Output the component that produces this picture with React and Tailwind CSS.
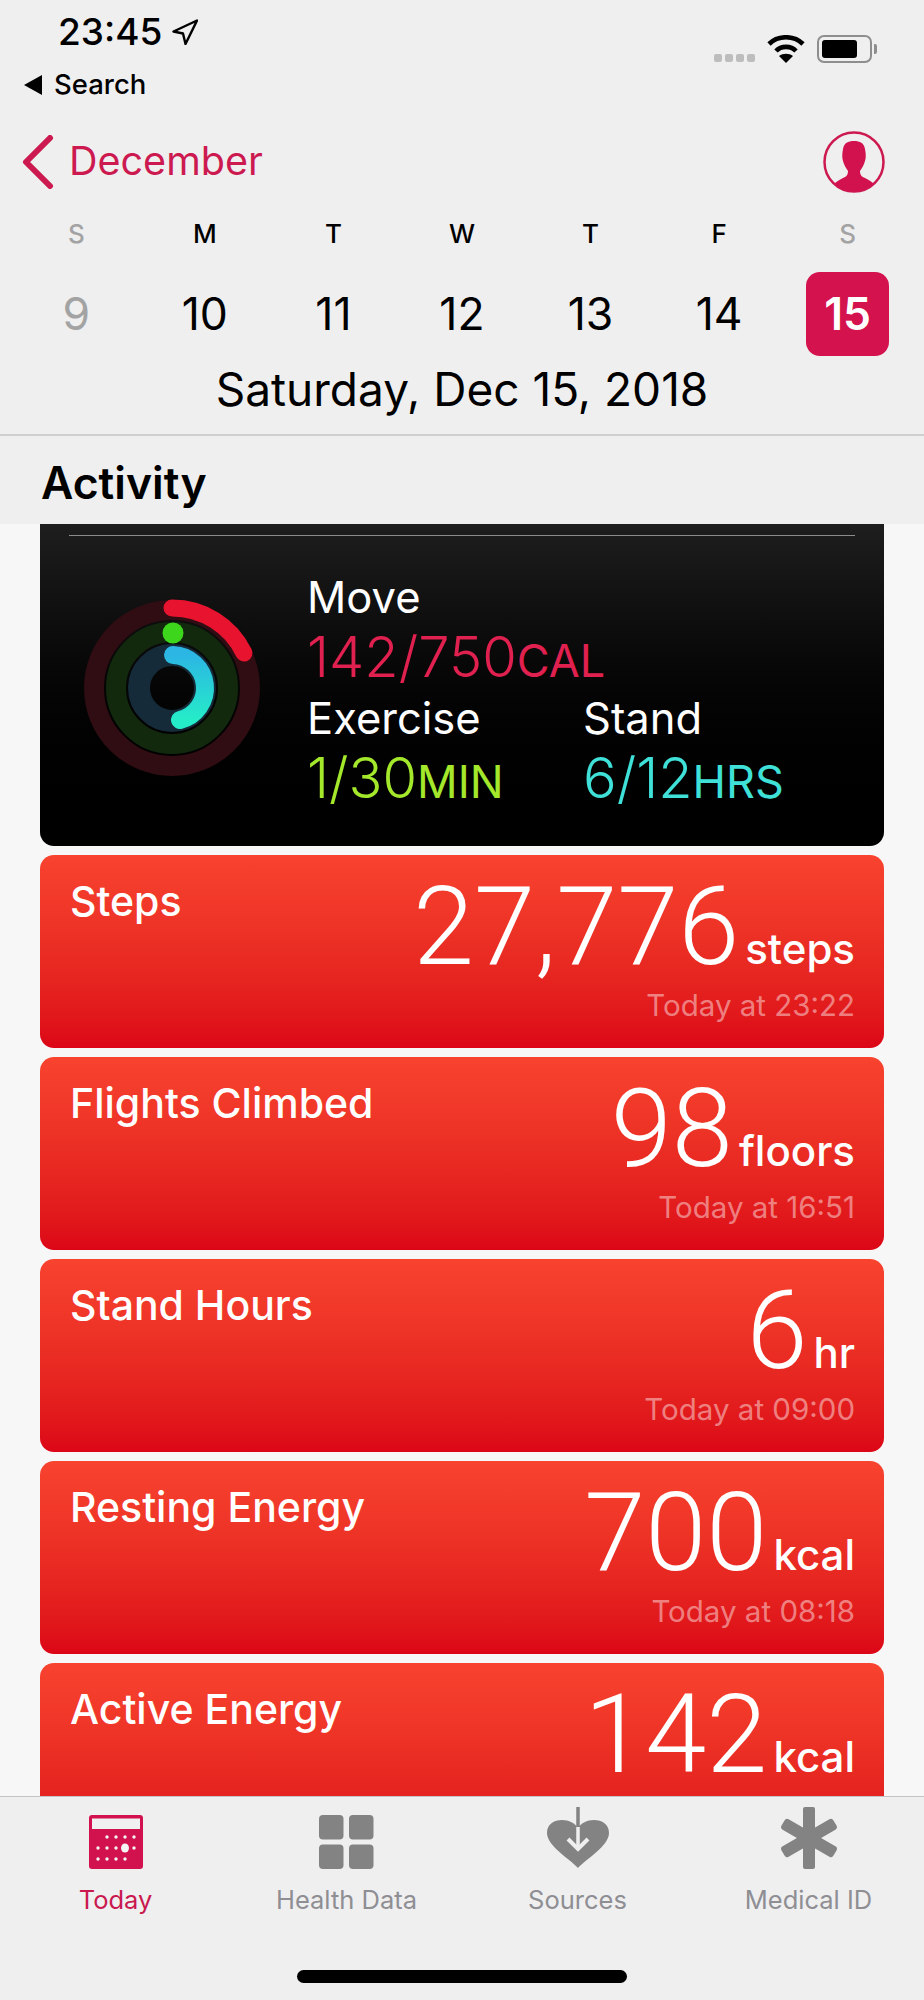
import React from 'react';

const DAYS = [
  { letter: 'S', num: '9', muted: true },
  { letter: 'M', num: '10' },
  { letter: 'T', num: '11' },
  { letter: 'W', num: '12' },
  { letter: 'T', num: '13' },
  { letter: 'F', num: '14' },
  { letter: 'S', num: '15', muted: true, active: true },
];

const CARDS = [
  { title: 'Steps', value: '27,776', unit: 'steps', time: 'Today at 23:22' },
  { title: 'Flights Climbed', value: '98', unit: 'floors', time: 'Today at 16:51' },
  { title: 'Stand Hours', value: '6', unit: 'hr', time: 'Today at 09:00' },
  { title: 'Resting Energy', value: '700', unit: 'kcal', time: 'Today at 08:18' },
  { title: 'Active Energy', value: '142', unit: 'kcal' },
];

// dots on the little calendar in the Today tab
const CAL_DOTS = [
  [18, 22], [27, 22], [36, 22], [45, 22],
  [9, 33], [18, 33], [27, 33], [45, 33],
  [9, 44], [18, 44], [27, 44], [36, 44],
];

function Rings() {
  return (
    <svg width="180" height="180" viewBox="0 0 180 180" className="ml-[13px] shrink-0 -translate-y-[3px]">
      <defs>
        <linearGradient id="blueArc" x1="0" y1="0" x2="0" y2="1">
          <stop offset="0" stopColor="#2cb6e4" />
          <stop offset="1" stopColor="#25ecc8" />
        </linearGradient>
      </defs>
      <circle cx="90" cy="90" r="78" fill="none" stroke="#300c13" strokeWidth="20" />
      <circle cx="90" cy="90" r="56" fill="none" stroke="#12290e" strokeWidth="20" />
      <circle cx="90" cy="90" r="33" fill="none" stroke="#152b39" strokeWidth="22" />
      <path d="M90 10 A80 80 0 0 1 162 55" fill="none" stroke="#e8132f" strokeWidth="17" strokeLinecap="round" />
      <circle cx="91" cy="35" r="10.5" fill="#3ed51d" />
      <path d="M91 57 A33 33 0 0 1 98 122" fill="none" stroke="url(#blueArc)" strokeWidth="18" strokeLinecap="round" />
    </svg>
  );
}

function Metric({ label, value, unit, color }) {
  return (
    <div>
      <div className="text-[43.5px] leading-[44px] text-white">{label}</div>
      <div className={`mt-[13px] flex items-baseline leading-[50px] ${color}`}>
        <span className="text-[56px] font-light">{value}</span>
        <span className="text-[45px] font-normal">{unit}</span>
      </div>
    </div>
  );
}

function StatCard({ title, value, unit, time }) {
  return (
    <div className="flex h-[193px] shrink-0 justify-between rounded-[14px] bg-gradient-to-b from-[#f8432f] to-[#dc0517] pr-[29px] pl-[30px]">
      <div className="pt-[24px] text-[41px] leading-[44px] font-medium text-white">{title}</div>
      <div className="flex flex-col items-end">
        <div className="flex h-[131px] items-baseline gap-[6px] pt-[13px] text-white">
          <span className="font-['Roboto'] text-[110px] leading-[118px] font-light">{value}</span>
          <span className="text-[42px] font-medium">{unit}</span>
        </div>
        {time && <div className="mt-[2px] text-[29.5px] leading-[34px] text-white/45">{time}</div>}
      </div>
    </div>
  );
}

function StatusBar() {
  return (
    <div className="flex h-[130px] justify-between pr-[47px]">
      <div>
        <div className="flex h-[64px] items-center gap-[10px] pl-[58px]">
          <span className="text-[37px] font-medium text-black">23:45</span>
          <svg width="26" height="26" viewBox="0 0 26 26" fill="none" stroke="#000" strokeWidth="2.4" strokeLinejoin="round">
            <path d="M25 1.5 L1.5 12.5 L11 14.5 L13.5 25 Z" />
          </svg>
        </div>
        <div className="flex h-[36px] items-center gap-[12px] pt-[5px] pl-[24px]">
          <svg width="18" height="20" viewBox="0 0 18 20">
            <path d="M18 0 V20 L0 10 Z" fill="#000" />
          </svg>
          <span className="text-[27.5px] font-medium text-black">Search</span>
        </div>
      </div>
      <div className="flex h-[67px] items-end gap-[12px] pb-[4px]">
        <div className="mb-[1px] flex gap-[3px]">
          <span className="h-[8px] w-[8px] rounded-[2px] bg-[#bdbdbd]" />
          <span className="h-[8px] w-[8px] rounded-[2px] bg-[#bdbdbd]" />
          <span className="h-[8px] w-[8px] rounded-[2px] bg-[#bdbdbd]" />
          <span className="h-[8px] w-[8px] rounded-[2px] bg-[#bdbdbd]" />
        </div>
        <svg width="38" height="28" viewBox="0 0 38 28" fill="none" stroke="#000" strokeWidth="4.6">
          <path d="M2 9 C11 0 27 0 36 9" />
          <path d="M9 16 C14 10.5 24 10.5 29 16" />
          <path d="M19 28 L12 21 C16 18 22 18 26 21 Z" fill="#000" stroke="none" />
        </svg>
        <div className="flex items-center gap-[2px]">
          <div className="flex h-[28px] w-[55px] items-center rounded-[7px] border-[2px] border-[#8e8e8e] p-[3px]">
            <div className="h-full w-[35px] rounded-[3px] bg-black" />
          </div>
          <div className="h-[10px] w-[3px] rounded-r-[2px] bg-[#8e8e8e]" />
        </div>
      </div>
    </div>
  );
}

function TabIcon({ name }) {
  if (name === 'today') {
    return (
      <svg width="54" height="54" viewBox="0 0 54 54">
        <rect width="54" height="54" rx="3" fill="#d2114f" />
        <rect x="3" y="3.5" width="48" height="10.5" fill="#f0f0f0" />
        {CAL_DOTS.map(([x, y]) => <circle key={`${x}-${y}`} cx={x} cy={y} r="1.7" fill="#f4f4f4" />)}
        <ellipse cx="36" cy="33" rx="4" ry="4.6" fill="#f4f4f4" />
      </svg>
    );
  }
  if (name === 'data') {
    return (
      <svg width="55" height="54" viewBox="0 0 55 54" fill="#838383">
        <rect width="24.5" height="24.5" rx="4" />
        <rect x="30" width="24.5" height="24.5" rx="4" />
        <rect y="29.5" width="24.5" height="24.5" rx="4" />
        <rect x="30" y="29.5" width="24.5" height="24.5" rx="4" />
      </svg>
    );
  }
  if (name === 'sources') {
    return (
      <svg width="64" height="62" viewBox="0 0 64 62">
        <path d="M32 61 C24 52 1 39 1 26 C1 17 8 13 16 13 C23 13 29 16 32 21 C35 16 41 13 48 13 C56 13 63 17 63 26 C63 39 40 52 32 61 Z" fill="#838383" />
        <path d="M32 0 V20" stroke="#838383" strokeWidth="3.5" strokeLinecap="round" fill="none" />
        <path d="M32 20 V41" stroke="#efeff0" strokeWidth="3.5" fill="none" />
        <path d="M22 32 L32 42 L42 32" stroke="#efeff0" strokeWidth="4" fill="none" />
      </svg>
    );
  }
  return (
    <svg width="60" height="62" viewBox="0 0 60 62" fill="#838383">
      <rect x="24" y="0" width="12" height="62" rx="2" />
      <rect x="24" y="1" width="12" height="60" rx="3" transform="rotate(60 30 31)" />
      <rect x="24" y="1" width="12" height="60" rx="3" transform="rotate(-60 30 31)" />
    </svg>
  );
}

function Tab({ name, label, active }) {
  return (
    <div className="flex flex-col items-center">
      <div className="flex h-[66px] items-end justify-center">
        <TabIcon name={name} />
      </div>
      <span className={`mt-[16px] text-[25.5px] leading-[30px] ${active ? 'text-[#c9194f]' : 'text-[#8e8e93]'}`}>{label}</span>
    </div>
  );
}

export default function App() {
  return (
    <div className="flex h-[2000px] w-[924px] flex-col overflow-hidden bg-[#f7f7f8] font-['Inter',sans-serif]">
      <header className="h-[434px] shrink-0 bg-[#efeff0]">
        <StatusBar />
        <div className="flex h-[64px] items-center justify-between pr-[39px] pl-[22px]">
          <div className="flex items-center gap-[15px]">
            <svg width="32" height="54" viewBox="0 0 32 54" fill="none" stroke="#cc1a50" strokeWidth="6" strokeLinecap="round" strokeLinejoin="round">
              <path d="M28 3 L4 27 L28 51" />
            </svg>
            <span className="text-[39.5px] text-[#cc1a50]">December</span>
          </div>
          <svg width="62" height="62" viewBox="0 0 62 62">
            <circle cx="31" cy="31" r="29.5" fill="#efeff0" stroke="#cc1a50" strokeWidth="2.5" />
            <path d="M31 10 C37 10 41 12 42 18 C43 23 43 27 42 30 C41 34 39 37 37 40 C37 44 39 46 42 47 C46 49 49 51 51 53 C46 58 39 60.5 31 60.5 C23 60.5 16 58 11 53 C13 51 16 49 20 47 C23 46 25 44 25 40 C23 37 21 34 20 30 C19 27 19 23 20 18 C21 12 25 10 31 10 Z" fill="#d2114f" />
          </svg>
        </div>
        <div className="grid grid-cols-7 px-[12px] pt-[24px]">
          {DAYS.map((d, i) => (
            <div key={i} className="flex flex-col items-center">
              <span className={`text-[26px] leading-[32px] font-medium ${d.muted ? 'text-[#a3a3a3]' : 'text-black'}`}>{d.letter}</span>
              <div className={`mt-[22px] flex h-[84px] w-[83px] items-center justify-center rounded-[14px] text-[44.5px] ${d.active ? 'bg-[#d4124e] font-semibold text-white' : d.muted ? 'text-[#a3a3a3]' : 'text-black'}`}>
                {d.num}
              </div>
            </div>
          ))}
        </div>
        <div className="mt-[7px] text-center text-[46px] leading-[52px] text-black">Saturday, Dec 15, 2018</div>
      </header>

      <div className="flex h-[90px] shrink-0 items-center border-t-2 border-[#cfcfcf] bg-[#efeff0] pt-[7px] pl-[41px] text-[44.5px] font-semibold text-black">
        Activity
      </div>

      <main className="flex min-h-0 flex-1 flex-col gap-[9px] overflow-hidden px-[40px]">
        <section className="h-[322px] shrink-0 rounded-b-[14px] bg-gradient-to-b from-[#1e1e1e] to-black px-[29px] pt-[11px]">
          <div className="h-px bg-[#8c8c8c]" />
          <div className="flex items-center pt-[39px]">
            <Rings />
            <div className="ml-[45px] flex flex-col">
              <Metric label="Move" value="142/750" unit="CAL" color="text-[#e0204f]" />
              <div className="mt-[10px] flex">
                <div className="w-[276px]">
                  <Metric label="Exercise" value="1/30" unit="MIN" color="text-[#a4e82c]" />
                </div>
                <Metric label="Stand" value="6/12" unit="HRS" color="text-[#3fe0d8]" />
              </div>
            </div>
          </div>
        </section>
        {CARDS.map(c => <StatCard key={c.title} {...c} />)}
      </main>

      <nav className="h-[204px] shrink-0 border-t border-[#c4c4c4] bg-[#efeff0]">
        <div className="grid grid-cols-4 pt-[6px]">
          <Tab name="today" label="Today" active />
          <Tab name="data" label="Health Data" />
          <Tab name="sources" label="Sources" />
          <Tab name="medical" label="Medical ID" />
        </div>
        <div className="mx-auto mt-[55px] h-[13px] w-[330px] rounded-full bg-black" />
      </nav>
    </div>
  );
}
